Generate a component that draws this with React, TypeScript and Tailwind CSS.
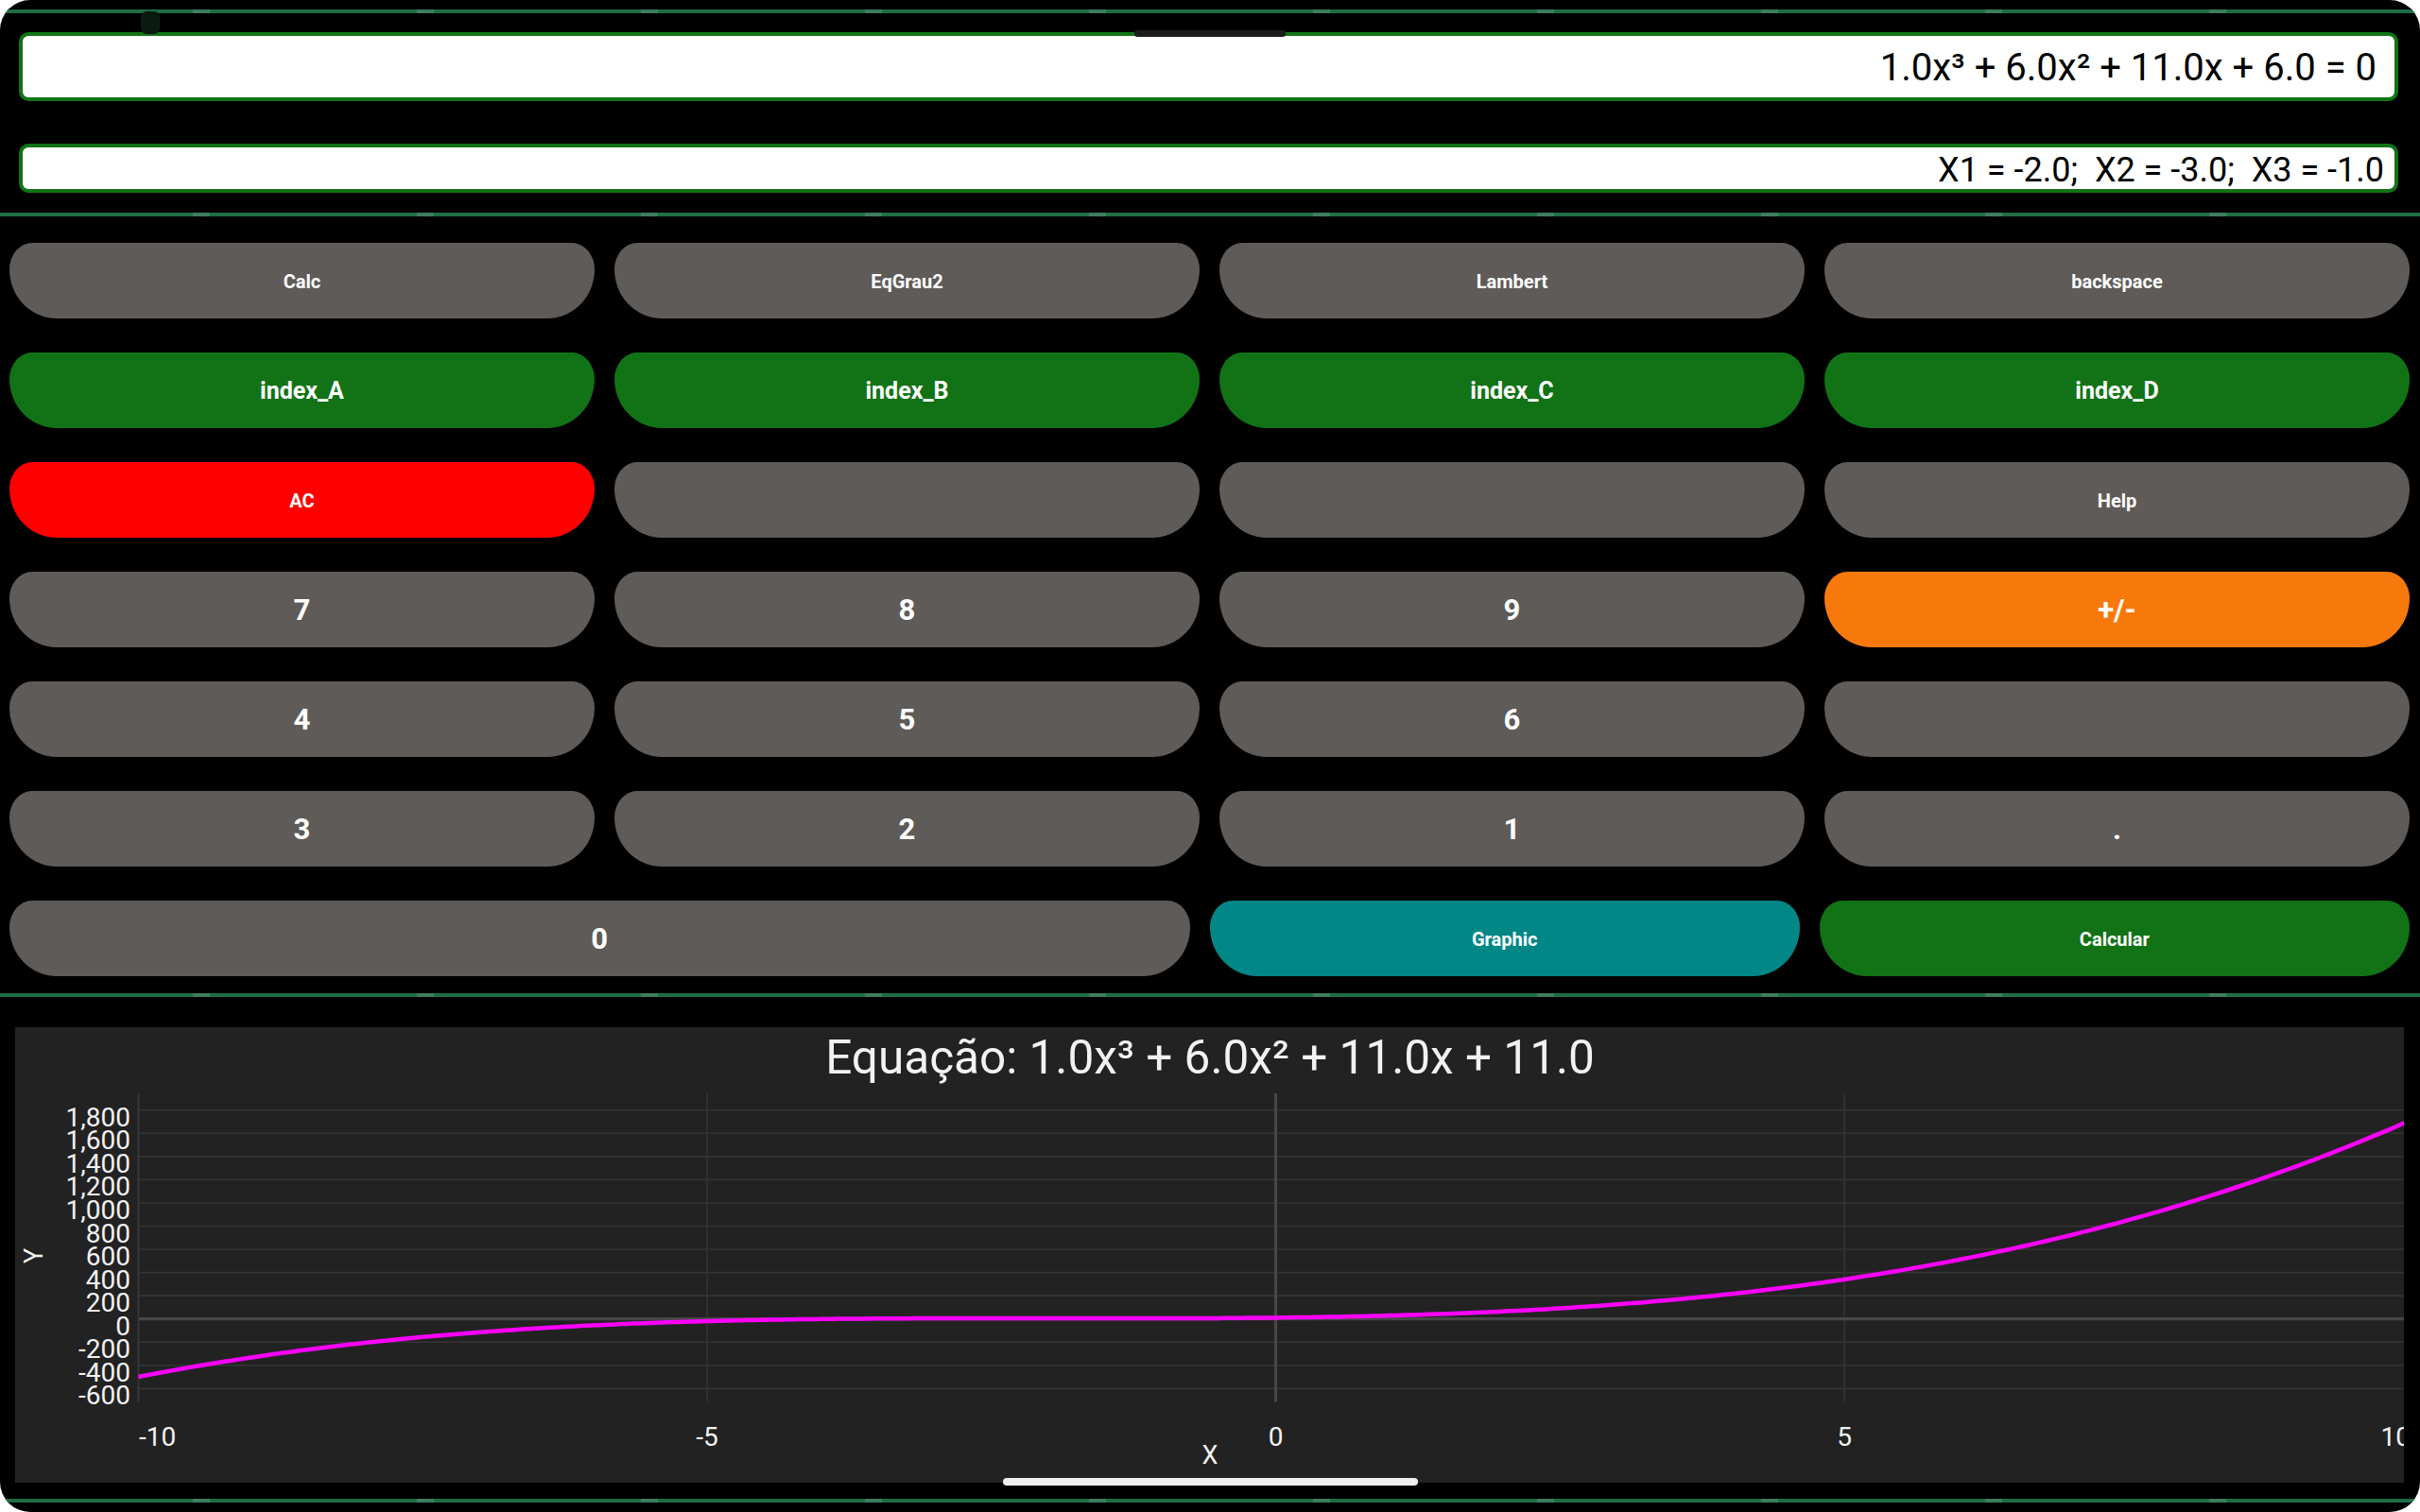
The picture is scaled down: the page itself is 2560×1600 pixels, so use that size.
import React from "react";

type Tone = "gray" | "green" | "red" | "orange" | "teal";
type Size = "sm" | "md" | "lg";

interface KeyDef {
  label: string;
  tone: Tone;
  size: Size;
  wide?: boolean;
}

const toneClass: Record<Tone, string> = {
  gray: "bg-[#5e5b58]",
  green: "bg-[#117316]",
  red: "bg-[#ff0000]",
  orange: "bg-[#f7790c]",
  teal: "bg-[#028787]",
};

const sizeClass: Record<Size, string> = {
  sm: "text-[20px]",
  md: "text-[25px]",
  lg: "text-[31px]",
};

const rows: KeyDef[][] = [
  [
    { label: "Calc", tone: "gray", size: "sm" },
    { label: "EqGrau2", tone: "gray", size: "sm" },
    { label: "Lambert", tone: "gray", size: "sm" },
    { label: "backspace", tone: "gray", size: "sm" },
  ],
  [
    { label: "index_A", tone: "green", size: "md" },
    { label: "index_B", tone: "green", size: "md" },
    { label: "index_C", tone: "green", size: "md" },
    { label: "index_D", tone: "green", size: "md" },
  ],
  [
    { label: "AC", tone: "red", size: "sm" },
    { label: "", tone: "gray", size: "sm" },
    { label: "", tone: "gray", size: "sm" },
    { label: "Help", tone: "gray", size: "sm" },
  ],
  [
    { label: "7", tone: "gray", size: "lg" },
    { label: "8", tone: "gray", size: "lg" },
    { label: "9", tone: "gray", size: "lg" },
    { label: "+/-", tone: "orange", size: "lg" },
  ],
  [
    { label: "4", tone: "gray", size: "lg" },
    { label: "5", tone: "gray", size: "lg" },
    { label: "6", tone: "gray", size: "lg" },
    { label: "", tone: "gray", size: "lg" },
  ],
  [
    { label: "3", tone: "gray", size: "lg" },
    { label: "2", tone: "gray", size: "lg" },
    { label: "1", tone: "gray", size: "lg" },
    { label: ".", tone: "gray", size: "lg" },
  ],
  [
    { label: "0", tone: "gray", size: "lg", wide: true },
    { label: "Graphic", tone: "teal", size: "sm" },
    { label: "Calcular", tone: "green", size: "sm" },
  ],
];

const Divider = () => (
  <div className="h-[4px] w-full bg-[repeating-linear-gradient(90deg,#1f6e46_0px,#1f6e46_204px,#3e7d5d_204px,#3e7d5d_222px,#1f6e46_222px,#1f6e46_237px)]" />
);

const CalcKey = ({ k }: { k: KeyDef }) => (
  <button
    className={`${k.wide ? "flex-[2]" : "flex-1"} basis-0 h-[80px] flex items-center justify-center pt-[2px] text-white font-bold ${toneClass[k.tone]} ${sizeClass[k.size]} rounded-tl-[24px_28px] rounded-tr-[24px_28px] rounded-bl-[50px_52px] rounded-br-[50px_52px]`}
  >
    {k.label}
  </button>
);

// plot mapping, panel coordinates
const X = (v: number) => 1333.5 + 120.3 * v;
const Y = (val: number) => 308.7 - 0.12275 * val;
const f = (x: number) => x * x * x + 6 * x * x + 11 * x + 11;

const Chart = () => {
  const pts: string[] = [];
  for (let i = 0; i <= 400; i++) {
    const v = -10 + (i * 20.2) / 400;
    pts.push(`${X(v).toFixed(1)},${Y(f(v)).toFixed(1)}`);
  }
  const yTicks = [1800, 1600, 1400, 1200, 1000, 800, 600, 400, 200, 0, -200, -400, -600];
  const fmt = (n: number) => (Math.abs(n) >= 1000 ? n.toLocaleString("en-US") : String(n));
  const top = 70;
  const bottom = 396.6;

  return (
    <svg width={2527} height={482} className="block" style={{ fontFamily: "Roboto, 'Liberation Sans', sans-serif" }}>
      {yTicks.map((t) =>
        t === 0 ? null : (
          <line key={t} x1={131} x2={2527} y1={Y(t)} y2={Y(t)} stroke="#343434" strokeWidth={1.6} />
        )
      )}
      {[-5, 5].map((v) => (
        <line key={v} x1={X(v)} x2={X(v)} y1={top} y2={bottom} stroke="#343434" strokeWidth={1.6} />
      ))}
      <line x1={X(-10)} x2={X(-10)} y1={top} y2={bottom} stroke="#3a3a3a" strokeWidth={1.6} />
      <line x1={131} x2={2527} y1={Y(0)} y2={Y(0)} stroke="#474747" strokeWidth={3.2} />
      <line x1={X(0)} x2={X(0)} y1={top} y2={bottom} stroke="#474747" strokeWidth={3.2} />
      <polyline points={pts.join(" ")} fill="none" stroke="#ff00ff" strokeWidth={4.5} strokeLinejoin="round" />

      <text x={1264} y={49} fill="#f2f2f2" fontSize={49.5} textAnchor="middle">
        Equação: 1.0x³ + 6.0x² + 11.0x + 11.0
      </text>

      {yTicks.map((t) => (
        <text key={t} x={122} y={Y(t) + 17} fill="#f2f2f2" fontSize={28} textAnchor="end">
          {fmt(t)}
        </text>
      ))}

      <text x={131} y={443} fill="#f2f2f2" fontSize={28} textAnchor="start">-10</text>
      <text x={X(-5)} y={443} fill="#f2f2f2" fontSize={28} textAnchor="middle">-5</text>
      <text x={X(0)} y={443} fill="#f2f2f2" fontSize={28} textAnchor="middle">0</text>
      <text x={X(5)} y={443} fill="#f2f2f2" fontSize={28} textAnchor="middle">5</text>
      <text x={2534} y={443} fill="#f2f2f2" fontSize={28} textAnchor="end">10</text>

      <text x={1264} y={462} fill="#f2f2f2" fontSize={27} textAnchor="middle">X</text>
      <text
        x={0}
        y={0}
        fill="#f2f2f2"
        fontSize={27}
        textAnchor="middle"
        transform="translate(28.5 242) rotate(-90)"
      >
        Y
      </text>
    </svg>
  );
};

export default function App() {
  return (
    <div className="w-[2560px] h-[1600px] bg-white overflow-hidden">
      <div
        className="relative w-full h-full bg-black rounded-[32px] overflow-hidden flex flex-col pt-[10px]"
        style={{ fontFamily: "Roboto, 'Liberation Sans', sans-serif" }}
      >
        <Divider />

        <div className="mt-[20px] mx-[20px] mr-[23px] h-[73px] bg-white border-[4px] border-[#117316] rounded-[10px] flex items-center justify-end pr-[19px] pt-[3px]">
          <span className="text-[40px] text-black leading-none">1.0x³ + 6.0x² + 11.0x + 6.0 = 0</span>
        </div>

        <div className="mt-[45px] mx-[20px] mr-[23px] h-[52px] bg-white border-[4px] border-[#117316] rounded-[10px] flex items-center justify-end pr-[11px] pt-[3px]">
          <span className="text-[36px] text-black leading-none whitespace-pre">X1 = -2.0;  X2 = -3.0;  X3 = -1.0</span>
        </div>

        <div className="mt-[21px]">
          <Divider />
        </div>

        <div className="mt-[28px] pl-[10px] pr-[11px] flex flex-col gap-[36px]">
          {rows.map((row, i) => (
            <div key={i} className="flex gap-[21px]">
              {row.map((k, j) => (
                <CalcKey key={j} k={k} />
              ))}
            </div>
          ))}
        </div>

        <div className="mt-[18px]">
          <Divider />
        </div>

        <div className="mt-[32px] ml-[16px] mr-[17px] h-[482px] bg-[#222222] overflow-hidden">
          <Chart />
        </div>

        <div className="mt-[17px]">
          <Divider />
        </div>

        {/* overlays: camera cutout, status bar blob, nav handle */}
        <div className="absolute left-[1200px] top-[32px] w-[160px] h-[7px] rounded-[3px] bg-[#1c1c1a]" />
        <div className="absolute left-[149px] top-[12px] w-[20px] h-[24px] rounded-[6px] bg-[#0b1a10]" />
        <div className="absolute left-[1061px] top-[1564px] w-[439px] h-[8px] rounded-full bg-[#eeeeee]" />
      </div>
    </div>
  );
}
